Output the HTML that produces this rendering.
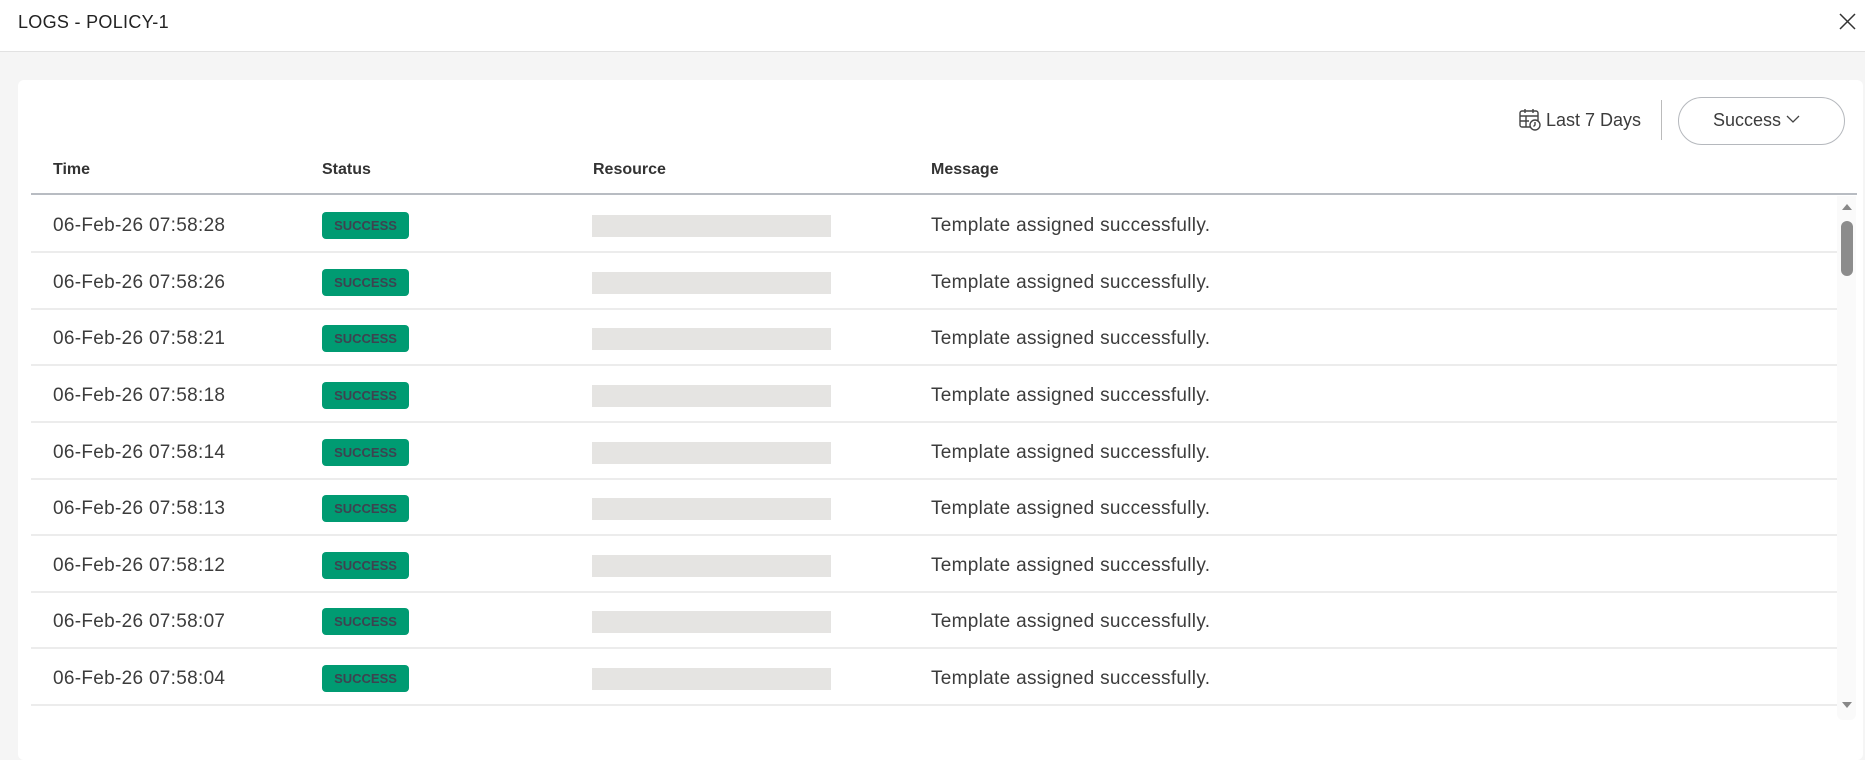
<!DOCTYPE html>
<html><head><meta charset="utf-8"><style>
*{margin:0;padding:0;box-sizing:border-box}
body{width:1865px;height:738px;overflow:hidden;background:#f5f5f5;font-family:"Liberation Sans",sans-serif;color:#3a3a3a;position:relative}
.hdr{position:absolute;left:0;top:0;width:1865px;height:52px;background:#fff;border-bottom:1px solid #e2e2e2}
.title{position:absolute;left:18px;top:12px;font-size:18px;letter-spacing:0.3px;color:#222}
.card{position:absolute;left:18px;top:80px;width:1845px;height:680px;background:#fff;border-radius:6px}
.abs{position:absolute}
.th{position:absolute;top:161px;font-size:16px;font-weight:bold;color:#333}
.row{position:absolute;left:31px;width:1806px;height:57px;border-bottom:2px solid #ececec}
.t{position:absolute;top:19px;font-size:19px;letter-spacing:0.3px;color:#3c3c3c}
.badge{position:absolute;left:291px;top:16px;width:87px;height:27px;background:#009b72;border-radius:4px;color:#3d4350;font-size:13px;font-weight:bold;text-align:center;line-height:27px}
.res{position:absolute;left:561px;top:19px;width:239px;height:22px;background:#e5e4e2}
</style></head><body>
<div class="hdr"><div class="title">LOGS - POLICY-1</div>
<svg class="abs" style="left:1839px;top:13px" width="17" height="17" viewBox="0 0 17 17"><path d="M1 1L16 16M16 1L1 16" stroke="#333" stroke-width="1.5"/></svg></div>
<div class="card"></div>
<svg class="abs" style="left:1518px;top:108px" width="24" height="24" viewBox="0 0 24 24" fill="none" stroke="#444" stroke-width="1.4"><rect x="2" y="3" width="18" height="16" rx="2"/><path d="M2 8H20M7 1V5M15 1V5M2 13H11M8 8V19"/><circle cx="17" cy="17" r="5" fill="#fff"/><path d="M17 14V17L15.5 18.5"/></svg>
<div class="abs" style="left:1546px;top:110px;font-size:18px;color:#3c3c3c">Last 7 Days</div>
<div class="abs" style="left:1661px;top:100px;width:1px;height:40px;background:#bbb"></div>
<div class="abs" style="left:1678px;top:97px;width:167px;height:48px;border:1.5px solid #b5b8bd;border-radius:24px;font-size:18px;color:#3c3c3c;line-height:45px;padding-left:34px">Success <svg width="14" height="9" viewBox="0 0 14 9" style="vertical-align:2px"><path d="M1 1L7 7L13 1" stroke="#444" stroke-width="1.3" fill="none"/></svg></div>
<div class="th" style="left:53px">Time</div>
<div class="th" style="left:322px">Status</div>
<div class="th" style="left:593px">Resource</div>
<div class="th" style="left:931px">Message</div>
<div class="abs" style="left:31px;top:193px;width:1826px;height:2px;background:#b8bcc2"></div>
<div class="abs" style="left:1837px;top:196px;width:19px;height:524px;background:#fafafa;border-radius:0 0 6px 6px"></div>
<svg class="abs" style="left:1841px;top:203px" width="12" height="8"><path d="M1 7L6 1L11 7Z" fill="#888"/></svg>
<div class="abs" style="left:1841px;top:221px;width:12px;height:55px;background:#8c8c8c;border-radius:6px"></div>
<svg class="abs" style="left:1841px;top:701px" width="12" height="8"><path d="M1 1L6 7L11 1Z" fill="#888"/></svg>
<div class="row" style="top:196px"><div class="t" style="left:22px">06-Feb-26 07:58:28</div><div class="badge">SUCCESS</div><div class="res"></div><div class="t" style="left:900px">Template assigned successfully.</div></div>
<div class="row" style="top:253px"><div class="t" style="left:22px">06-Feb-26 07:58:26</div><div class="badge">SUCCESS</div><div class="res"></div><div class="t" style="left:900px">Template assigned successfully.</div></div>
<div class="row" style="top:309px"><div class="t" style="left:22px">06-Feb-26 07:58:21</div><div class="badge">SUCCESS</div><div class="res"></div><div class="t" style="left:900px">Template assigned successfully.</div></div>
<div class="row" style="top:366px"><div class="t" style="left:22px">06-Feb-26 07:58:18</div><div class="badge">SUCCESS</div><div class="res"></div><div class="t" style="left:900px">Template assigned successfully.</div></div>
<div class="row" style="top:423px"><div class="t" style="left:22px">06-Feb-26 07:58:14</div><div class="badge">SUCCESS</div><div class="res"></div><div class="t" style="left:900px">Template assigned successfully.</div></div>
<div class="row" style="top:479px"><div class="t" style="left:22px">06-Feb-26 07:58:13</div><div class="badge">SUCCESS</div><div class="res"></div><div class="t" style="left:900px">Template assigned successfully.</div></div>
<div class="row" style="top:536px"><div class="t" style="left:22px">06-Feb-26 07:58:12</div><div class="badge">SUCCESS</div><div class="res"></div><div class="t" style="left:900px">Template assigned successfully.</div></div>
<div class="row" style="top:592px"><div class="t" style="left:22px">06-Feb-26 07:58:07</div><div class="badge">SUCCESS</div><div class="res"></div><div class="t" style="left:900px">Template assigned successfully.</div></div>
<div class="row" style="top:649px"><div class="t" style="left:22px">06-Feb-26 07:58:04</div><div class="badge">SUCCESS</div><div class="res"></div><div class="t" style="left:900px">Template assigned successfully.</div></div>
</body></html>
